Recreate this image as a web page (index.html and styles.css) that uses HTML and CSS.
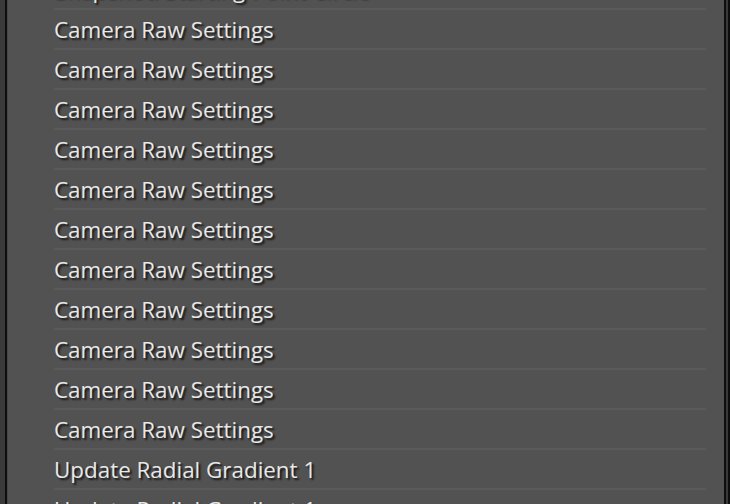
FILE: index.html
```html
<!DOCTYPE html>
<html>
<head>
<meta charset="utf-8">
<link rel="stylesheet" href="styles.css">
</head>
<body>
<div class="frame">
  <div class="edge-left"></div>
  <div class="edge-black"></div>
  <div class="panel">
    <ul class="history">
      <li class="item">Snapshot: Starting Point Circle</li>
      <li class="item">Camera Raw Settings</li>
      <li class="item">Camera Raw Settings</li>
      <li class="item">Camera Raw Settings</li>
      <li class="item">Camera Raw Settings</li>
      <li class="item">Camera Raw Settings</li>
      <li class="item">Camera Raw Settings</li>
      <li class="item">Camera Raw Settings</li>
      <li class="item">Camera Raw Settings</li>
      <li class="item">Camera Raw Settings</li>
      <li class="item">Camera Raw Settings</li>
      <li class="item">Camera Raw Settings</li>
      <li class="item">Update Radial Gradient 1</li>
      <li class="item">Update Radial Gradient 1</li>
    </ul>
  </div>
  <div class="edge-black-r"></div>
  <div class="edge-grey-r"></div>
  <div class="edge-black-r"></div>
</div>
</body>
</html>
```

FILE: styles.css
```css
html, body {
  margin: 0;
  padding: 0;
  width: 730px;
  height: 504px;
  overflow: hidden;
  background: #515151;
}
.frame {
  display: flex;
  width: 730px;
  height: 504px;
  overflow: hidden;
}
.edge-left {
  width: 5px;
  background: #3a3a3a;
  flex: none;
}
.edge-black {
  width: 2px;
  background: #0e0e0e;
  flex: none;
}
.panel {
  flex: 1;
  background: #525252;
  border-left: 1px solid #474747;
  padding: 0 18px 0 46px;
  overflow: hidden;
}
.edge-black-r {
  width: 2px;
  background: #0e0e0e;
  flex: none;
}
.edge-grey-r {
  width: 2px;
  background: #3a3a3a;
  flex: none;
}
.history {
  list-style: none;
  margin: -30px 0 0 0;
  padding: 0;
}
.item {
  box-sizing: border-box;
  height: 40px;
  border-bottom: 2px solid #5a5a5a;
  display: flex;
  align-items: center;
  font-family: "Open Sans", "Noto Sans", sans-serif;
  font-size: 22.4px;
  color: #e8e8e8;
  text-shadow: 2px 2px 2px rgba(0, 0, 0, 0.75);
  white-space: nowrap;
  padding-top: 1px;
}
```
